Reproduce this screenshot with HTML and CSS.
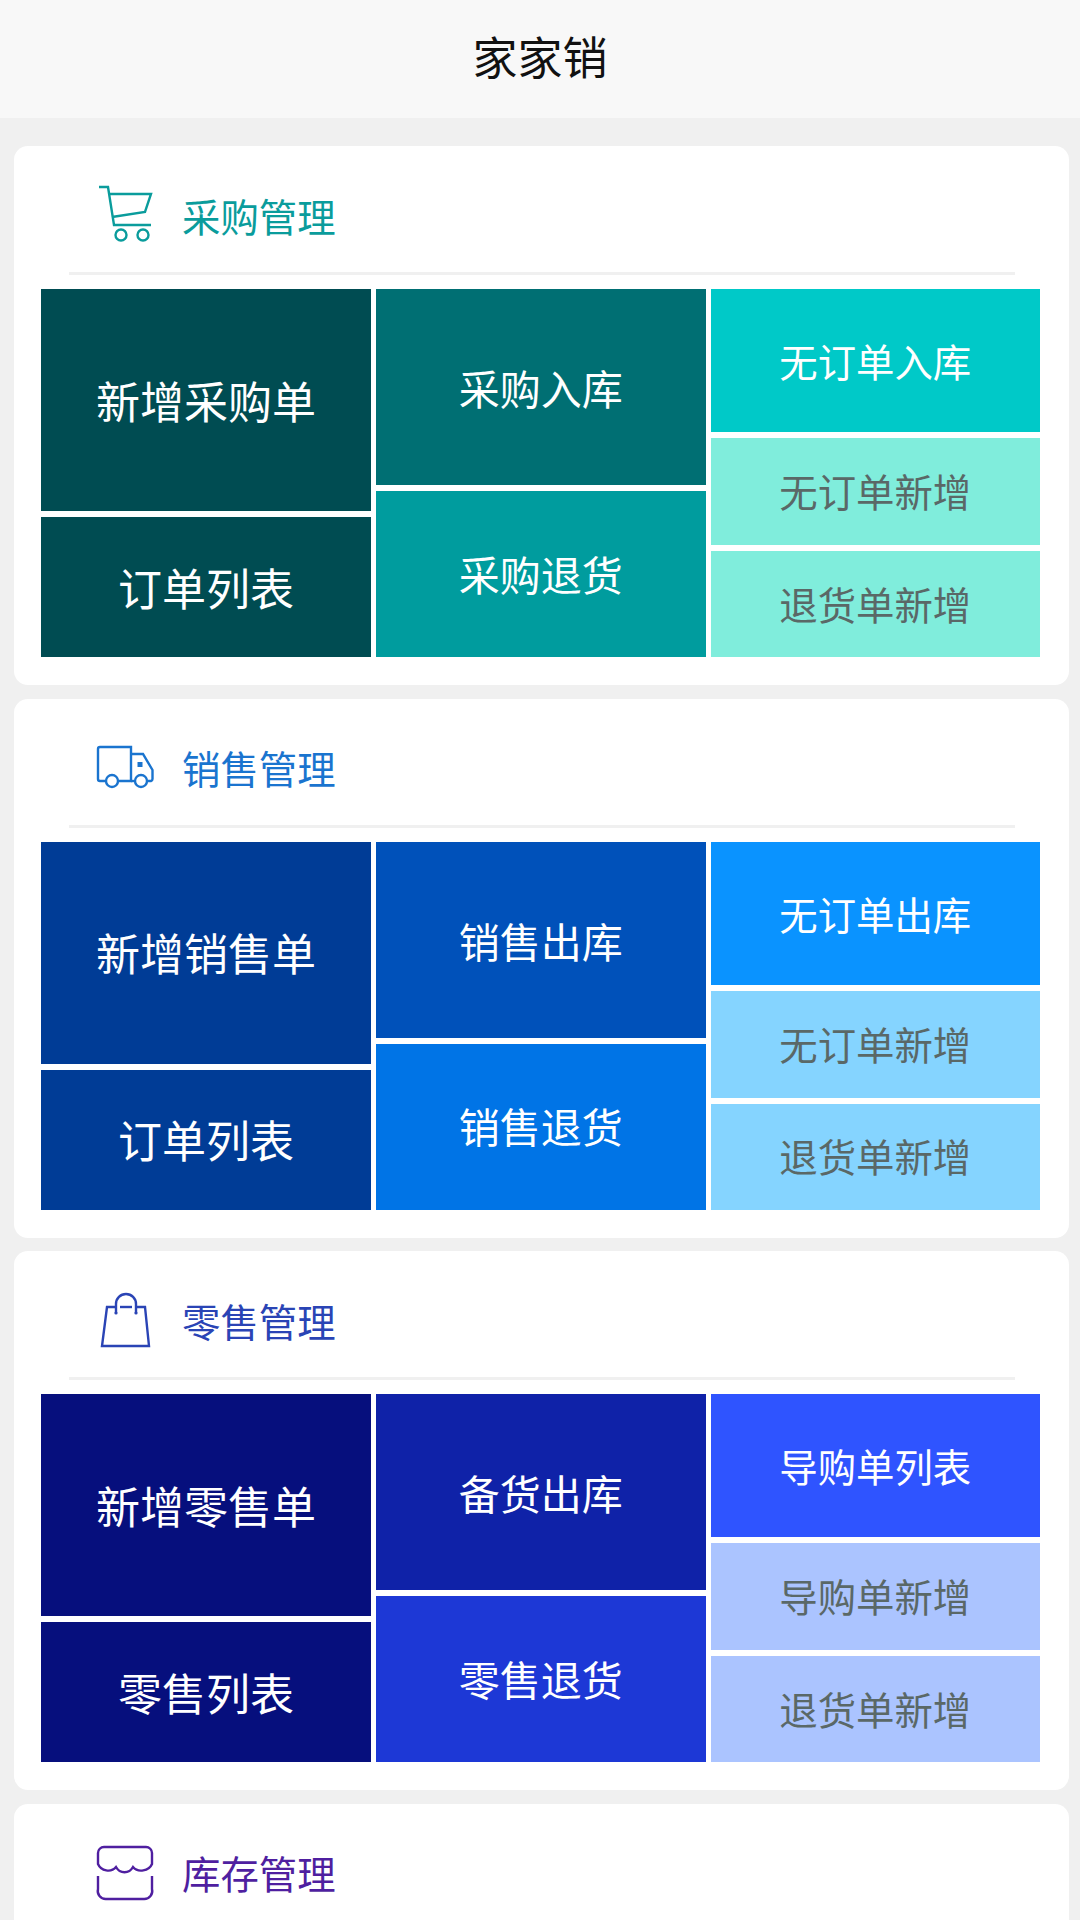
FILE: index.html
```html
<!DOCTYPE html>
<html lang="zh-CN">
<head>
  <meta charset="UTF-8" />
  <meta name="viewport" content="width=device-width, initial-scale=1.0"/>
  <title>家家销</title>
  <link rel="stylesheet" href="styles.css">
</head>
<body>
  <header class="topbar">家家销</header>

  <main class="content">
    <section class="card teal">
      <div class="card-head">
        <svg class="icon" viewBox="0 0 62 60">
          <path d="M7 3H16L22 41H59"/>
          <path d="M18 10H59L53 28L20 33"/>
          <circle cx="29" cy="51" r="5.5"/>
          <circle cx="51" cy="51" r="5.5"/>
        </svg>
        <h2 class="card-title">采购管理</h2>
      </div>
      <div class="tiles">
        <div class="tile-col">
          <a class="tile big shade-1 h-222">新增采购单</a>
          <a class="tile big shade-1 h-140">订单列表</a>
        </div>
        <div class="tile-col">
          <a class="tile mid shade-2 h-196">采购入库</a>
          <a class="tile mid shade-3 h-166">采购退货</a>
        </div>
        <div class="tile-col">
          <a class="tile small shade-4 h-143">无订单入库</a>
          <a class="tile small shade-5 h-107">无订单新增</a>
          <a class="tile small shade-5 h-106">退货单新增</a>
        </div>
      </div>
    </section>

    <section class="card blue">
      <div class="card-head">
        <svg class="icon" viewBox="0 0 62 60">
          <path d="M14 44H8A2 2 0 0 1 6 42V12A2 2 0 0 1 8 10H39V44H26"/>
          <path d="M39 17H51L60.500 33V42A2 2 0 0 1 59 44H55"/>
          <path d="M42 44H39"/>
          <circle cx="20" cy="44" r="6"/>
          <circle cx="49" cy="44" r="6"/>
          <rect class="solid" x="45.500" y="25" width="5" height="5"/>
        </svg>
        <h2 class="card-title">销售管理</h2>
      </div>
      <div class="tiles">
        <div class="tile-col">
          <a class="tile big shade-1 h-222">新增销售单</a>
          <a class="tile big shade-1 h-140">订单列表</a>
        </div>
        <div class="tile-col">
          <a class="tile mid shade-2 h-196">销售出库</a>
          <a class="tile mid shade-3 h-166">销售退货</a>
        </div>
        <div class="tile-col">
          <a class="tile small shade-4 h-143">无订单出库</a>
          <a class="tile small shade-5 h-107">无订单新增</a>
          <a class="tile small shade-5 h-106">退货单新增</a>
        </div>
      </div>
    </section>

    <section class="card indigo">
      <div class="card-head">
        <svg class="icon" viewBox="0 0 62 60">
          <path d="M24 18H15L10 57H57L53 18H44"/>
          <path d="M28 18H40"/>
          <path d="M24 24V15A10 10 0 0 1 44 15V24"/>
          <circle class="solid" cx="24" cy="24" r="1.6"/>
          <circle class="solid" cx="44" cy="24" r="1.6"/>
        </svg>
        <h2 class="card-title">零售管理</h2>
      </div>
      <div class="tiles">
        <div class="tile-col">
          <a class="tile big shade-1 h-222">新增零售单</a>
          <a class="tile big shade-1 h-140">零售列表</a>
        </div>
        <div class="tile-col">
          <a class="tile mid shade-2 h-196">备货出库</a>
          <a class="tile mid shade-3 h-166">零售退货</a>
        </div>
        <div class="tile-col">
          <a class="tile small shade-4 h-143">导购单列表</a>
          <a class="tile small shade-5 h-107">导购单新增</a>
          <a class="tile small shade-5 h-106">退货单新增</a>
        </div>
      </div>
    </section>

    <section class="card purple">
      <div class="card-head">
        <svg class="icon" viewBox="0 0 62 60">
          <path d="M6 22V11A6 6 0 0 1 12 5H54A6 6 0 0 1 60 11V22C57 29 46 31 41 25C37 32 28 32 24 25C19 31 9 29 6 22Z"/>
          <path d="M6 34V47A8 8 0 0 0 14 57H52A8 8 0 0 0 60 47V34"/>
        </svg>
        <h2 class="card-title">库存管理</h2>
      </div>
    </section>
  </main>
</body>
</html>
```

FILE: styles.css
```css
html, body {
  height: 1920px;
  overflow: hidden;
}

body {
  margin: 0;
  background-color: #f0f0f0;
  font-family: 'Noto Sans CJK SC', 'Noto Sans', sans-serif;
}

.topbar {
  height: 118px;
  line-height: 112px;
  background-color: #f8f8f8;
  color: #111;
  font-size: 45px;
  text-align: center;
}

.content {
  display: flex;
  flex-direction: column;
  gap: 13.5px;
  padding: 28px 11px 0 14px;
}

.card {
  background: #fff;
  border-radius: 14px;
  padding-bottom: 28px;
}

.card-head {
  display: flex;
  align-items: center;
  gap: 28px;
  height: 129px;
  box-sizing: border-box;
  margin: 0 54px 14px 55px;
  padding: 10px 0 0 23px;
  border-bottom: 3px solid #f0f0f0;
}

.icon {
  width: 62px;
  height: 60px;
  flex: none;
  overflow: visible;
  fill: none;
  stroke: var(--accent);
  stroke-width: 2.4;
}

.icon .solid {
  fill: var(--accent);
  stroke: none;
}

.card-title {
  margin: 1px 0 0;
  font-size: 38.4px;
  font-weight: 400;
  color: var(--accent);
}

.tiles {
  display: grid;
  grid-template-columns: 330px 329.5px 329.5px;
  gap: 5px;
  margin: 0 29px 0 27px;
}

.tile-col {
  display: flex;
  flex-direction: column;
  gap: 6px;
}

.tile {
  display: flex;
  align-items: center;
  justify-content: center;
  box-sizing: border-box;
  color: #fff;
}

.big { font-size: 44px; padding-bottom: 1px; }
.mid { font-size: 41px; }
.small { font-size: 38.4px; padding-bottom: 1px; }

.h-222 { height: 222px; }
.h-196 { height: 196px; }
.h-166 { height: 166px; padding-bottom: 3px; }
.h-143 { height: 143px; }
.h-140 { height: 140px; }
.h-107 { height: 107px; padding-bottom: 3px; }
.h-106 { height: 106px; padding-bottom: 3px; }

.shade-1 { background-color: var(--shade-1); }
.shade-2 { background-color: var(--shade-2); }
.shade-3 { background-color: var(--shade-3); }
.shade-4 { background-color: var(--shade-4); }
.shade-5 { background-color: var(--shade-5); color: #5a6867; }

.teal {
  --accent: #0a9c9c;
  --shade-1: #004c52;
  --shade-2: #006f73;
  --shade-3: #009c9e;
  --shade-4: #00c9c8;
  --shade-5: #80eddc;
}

.blue {
  --accent: #1a74cf;
  --shade-1: #003c96;
  --shade-2: #0051ba;
  --shade-3: #0074e6;
  --shade-4: #0a93ff;
  --shade-5: #85d4ff;
}

.indigo {
  --accent: #2a44b5;
  --shade-1: #060f7d;
  --shade-2: #0f22a8;
  --shade-3: #1d38d6;
  --shade-4: #2f54ff;
  --shade-5: #abc4ff;
}

.purple {
  --accent: #4f1fa0;
  min-height: 300px;
}
```
